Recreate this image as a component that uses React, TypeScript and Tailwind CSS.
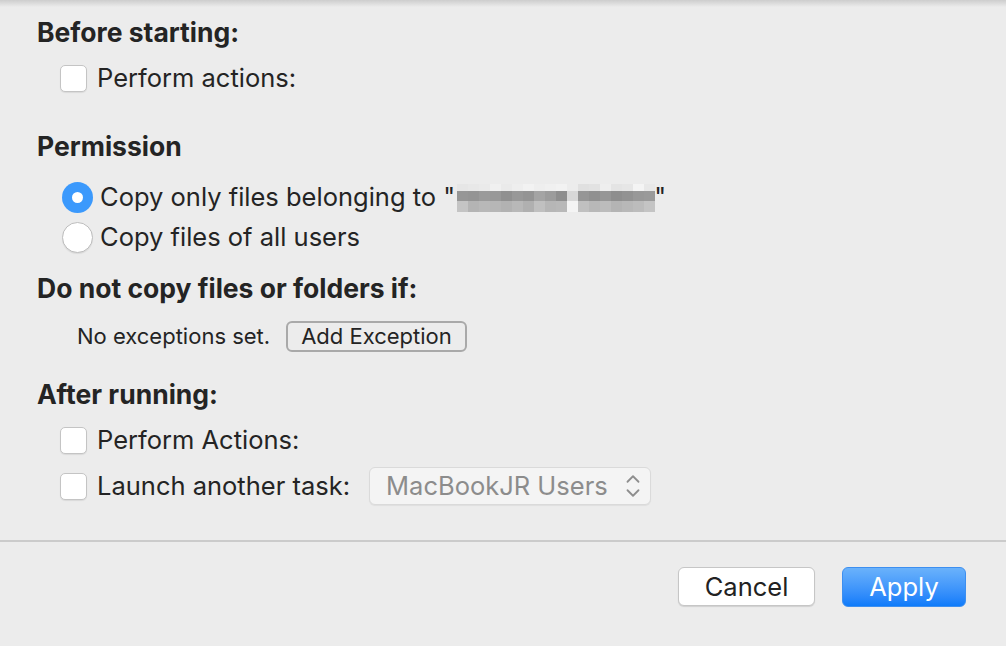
import { ChevronUp, ChevronDown } from "lucide-react";

const font = { fontFamily: "Inter, 'Noto Sans', sans-serif" };

const mosaic = [
  ["bg-[#e6e6e6]", "bg-[#969696]", "bg-[#c4c4c4]"],
  ["bg-[#e8e8e8]", "bg-[#949494]", "bg-[#b4b4b4]"],
  ["bg-[#eaeaea]", "bg-[#9a9a9a]", "bg-[#b8b8b8]"],
  ["bg-[#f0f0f0]", "bg-[#989898]", "bg-[#b6b6b6]"],
  ["bg-[#eaeaea]", "bg-[#909090]", "bg-[#b2b2b2]"],
  ["bg-[#eeeeee]", "bg-[#989898]", "bg-[#b8b8b8]"],
  ["bg-[#f2f2f2]", "bg-[#949494]", "bg-[#b0b0b0]"],
  ["bg-[#eeeeee]", "bg-[#a4a4a4]", "bg-[#c0c0c0]"],
  ["bg-[#f0f0f0]", "bg-[#9c9c9c]", "bg-[#b6b6b6]"],
  ["bg-[#f2f2f2]", "bg-[#8e8e8e]", "bg-[#b8b8b8]"],
  ["bg-[#ececec]", "bg-[#d8d8d8]", "bg-[#f4f4f4]"],
  ["bg-[#e0e0e0]", "bg-[#969696]", "bg-[#c0c0c0]"],
  ["bg-[#e2e2e2]", "bg-[#909090]", "bg-[#b8b8b8]"],
  ["bg-[#eeeeee]", "bg-[#969696]", "bg-[#bcbcbc]"],
  ["bg-[#e4e4e4]", "bg-[#8e8e8e]", "bg-[#b4b4b4]"],
  ["bg-[#e6e6e6]", "bg-[#929292]", "bg-[#b8b8b8]"],
  ["bg-[#f4f4f4]", "bg-[#989898]", "bg-[#bcbcbc]"],
  ["bg-[#e8e8e8]", "bg-[#9a9a9a]", "bg-[#c4c4c4]"],
];

function Checkbox() {
  return (
    <span className="w-[27px] h-[27px] shrink-0 rounded-[5px] bg-white border border-[#c4c4c4] shadow-[0_1px_1px_rgba(0,0,0,0.08)]" />
  );
}

function Radio({ checked }: { checked?: boolean }) {
  if (checked) {
    return (
      <span className="w-[31px] h-[31px] shrink-0 rounded-full bg-[#3b99fc] flex items-center justify-center">
        <span className="w-[11px] h-[11px] rounded-full bg-white" />
      </span>
    );
  }
  return (
    <span className="w-[31px] h-[31px] shrink-0 rounded-full bg-white border border-[#bdbdbd] shadow-[0_1px_1px_rgba(0,0,0,0.08)]" />
  );
}

function Heading({ children }: { children: string }) {
  return (
    <div className="h-[30px] flex items-center pl-[37px] text-[26.5px] font-bold text-[#242424]">
      {children}
    </div>
  );
}

export default function App() {
  return (
    <div
      className="w-[1006px] h-[646px] bg-[#ececec] relative overflow-hidden text-[#242424]"
      style={font}
    >
      <div className="absolute top-0 left-0 right-0 h-[7px] bg-gradient-to-b from-[#cdcdcd] to-[#ececec]" />

      <div className="pt-[18px] flex flex-col">
        <Heading>Before starting:</Heading>

        <div className="mt-[15px] h-[30px] flex items-center pl-[60px] gap-[10px] text-[25.5px]">
          <Checkbox />
          <span>Perform actions:</span>
        </div>

        <div className="mt-[39px]">
          <Heading>Permission</Heading>
        </div>

        <div className="mt-[20px] h-[30px] flex items-center pl-[62px] text-[25.5px]">
          <Radio checked />
          <span className="ml-[7px] whitespace-pre">Copy only files belonging to "</span>
          <span className="flex h-[28px] ml-[2px] mt-[1px]">
            {mosaic.map((c, i) => (
              <span key={i} className="flex flex-col w-[11px]">
                <span className={`h-[7px] ${c[0]}`} />
                <span className={`h-[10px] ${c[1]}`} />
                <span className={`h-[11px] ${c[2]}`} />
              </span>
            ))}
          </span>
          <span className="-ml-[1px]">"</span>
        </div>

        <div className="mt-[10px] h-[30px] flex items-center pl-[62px] gap-[7px] text-[25.5px]">
          <Radio />
          <span>Copy files of all users</span>
        </div>

        <div className="mt-[22px]">
          <Heading>Do not copy files or folders if:</Heading>
        </div>

        <div className="mt-[17px] h-[30px] flex items-center pl-[77px] gap-[16px] text-[22px]">
          <span>No exceptions set.</span>
          <button className="h-[31px] px-[13px] rounded-[6px] border-2 border-[#a9a9a9] bg-[#ececec] text-[22px] leading-none">
            Add Exception
          </button>
        </div>

        <div className="mt-[29px]">
          <Heading>After running:</Heading>
        </div>

        <div className="mt-[15px] h-[30px] flex items-center pl-[60px] gap-[10px] text-[25.5px]">
          <Checkbox />
          <span>Perform Actions:</span>
        </div>

        <div className="mt-[12px] h-[38px] flex items-center pl-[60px] gap-[10px] text-[25.5px]">
          <Checkbox />
          <span>Launch another task:</span>
          <div className="ml-[9px] w-[282px] h-[38px] rounded-[6px] bg-[#f4f4f4] border border-[#dadada] shadow-[0_1px_1px_rgba(0,0,0,0.06)] flex items-center justify-between pl-[16px] pr-[6px] text-[#8c8c8c]">
            <span>MacBookJR Users</span>
            <span className="flex flex-col items-center -space-y-[8px] text-[#8e8e8e]">
              <ChevronUp size={22} strokeWidth={2} />
              <ChevronDown size={22} strokeWidth={2} />
            </span>
          </div>
        </div>

        <div className="mt-[35px] h-[2px] bg-[#cbcbcb]" />

        <div className="mt-[25px] flex justify-end pr-[40px] gap-[27px] text-[25.5px]">
          <button className="w-[137px] h-[39px] rounded-[6px] bg-white border border-[#c6c6c6] shadow-[0_1px_1px_rgba(0,0,0,0.12)] text-[#222]">
            Cancel
          </button>
          <button className="w-[124px] h-[40px] rounded-[6px] bg-gradient-to-b from-[#6ab2fb] to-[#0c7bfa] border border-[#3d8ff0] text-white">
            Apply
          </button>
        </div>
      </div>
    </div>
  );
}
